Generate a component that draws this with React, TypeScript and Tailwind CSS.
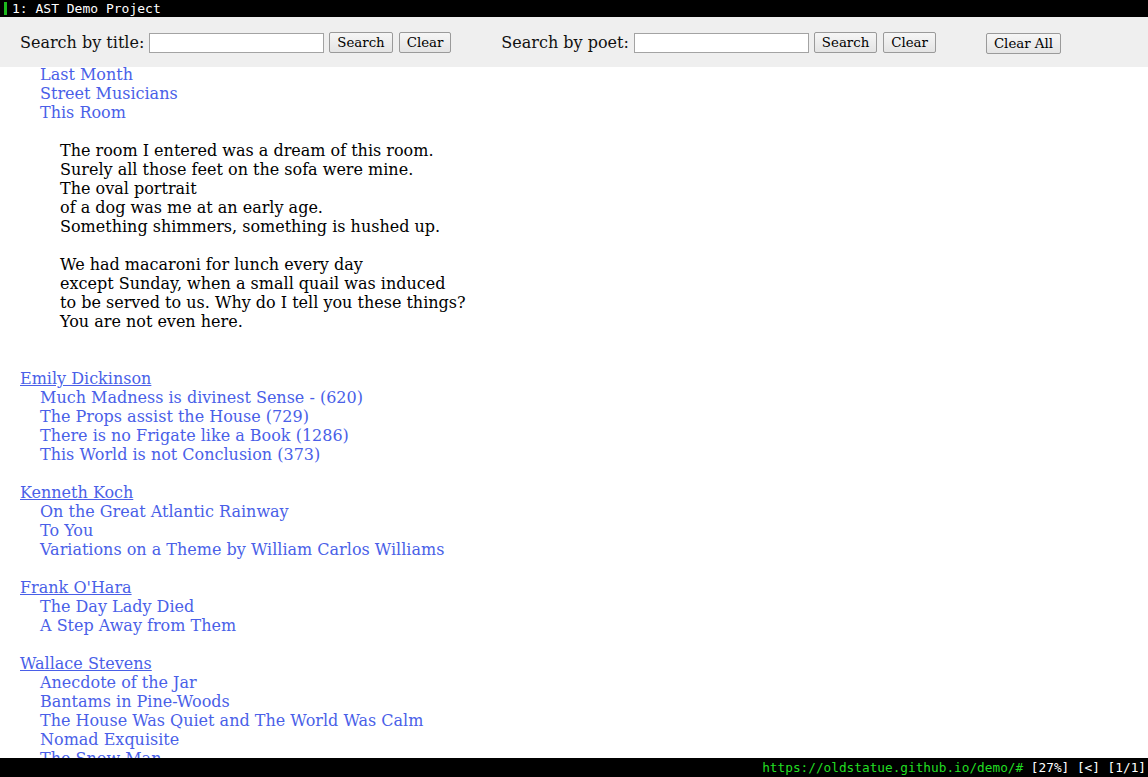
import React from 'react';

const serif = "font-['DejaVu_Serif','Liberation_Serif',serif]";
const mono = "font-['DejaVu_Sans_Mono','Liberation_Mono',monospace]";

const poets = [
  {
    name: 'Emily Dickinson',
    poems: [
      'Much Madness is divinest Sense - (620)',
      'The Props assist the House (729)',
      'There is no Frigate like a Book (1286)',
      'This World is not Conclusion (373)',
    ],
  },
  {
    name: 'Kenneth Koch',
    poems: ['On the Great Atlantic Rainway', 'To You', 'Variations on a Theme by William Carlos Williams'],
  },
  { name: "Frank O'Hara", poems: ['The Day Lady Died', 'A Step Away from Them'] },
  {
    name: 'Wallace Stevens',
    poems: [
      'Anecdote of the Jar',
      'Bantams in Pine-Woods',
      'The House Was Quiet and The World Was Calm',
      'Nomad Exquisite',
      'The Snow Man',
      'The Emperor of Ice-Cream',
    ],
  },
];

const stanzas = [
  [
    'The room I entered was a dream of this room.',
    'Surely all those feet on the sofa were mine.',
    'The oval portrait',
    'of a dog was me at an early age.',
    'Something shimmers, something is hushed up.',
  ],
  [
    'We had macaroni for lunch every day',
    'except Sunday, when a small quail was induced',
    'to be served to us. Why do I tell you these things?',
    'You are not even here.',
  ],
];

function Btn({ children }: { children: React.ReactNode }) {
  return (
    <button
      className={`${serif} h-[21px] px-[7px] text-[13.33px] leading-none text-black border border-[#9a9a9a] rounded-[2px] bg-gradient-to-b from-[#f6f6f6] to-[#e4e4e4]`}
    >
      {children}
    </button>
  );
}

function SearchGroup({ label }: { label: string }) {
  return (
    <div className="flex items-center">
      <span className="text-[16px] text-[#111]">{label}</span>
      <input className="ml-[5px] w-[175px] h-[20px] border border-[#a3a3a3] bg-white" />
      <div className="ml-[5px] flex gap-[6px]">
        <Btn>Search</Btn>
        <Btn>Clear</Btn>
      </div>
    </div>
  );
}

export default function App() {
  return (
    <div className={`${serif} h-[777px] w-[1148px] flex flex-col overflow-hidden bg-white`}>
      <div className={`${mono} h-[17px] bg-black text-white text-[13px] leading-[17px] flex items-center`}>
        <div className="ml-[4px] w-[3px] h-[13px] bg-[#1db91d]" />
        <span className="ml-[5px]">1: AST Demo Project</span>
      </div>

      <div className="h-[50px] bg-[#efefef] flex items-center pl-[20px] pt-[1px]">
        <SearchGroup label="Search by title:" />
        <div className="ml-[50px]">
          <SearchGroup label="Search by poet:" />
        </div>
        <div className="ml-[50px]">
          <Btn>Clear All</Btn>
        </div>
      </div>

      <div className="flex-1 overflow-hidden text-[16px] leading-[19px]">
        <div className="-mt-[2px] pl-[20px]">
          <div className="pl-[20px] text-[#4a5fe8]">
            <div>Last Month</div>
            <div>Street Musicians</div>
            <div>This Room</div>
          </div>
          <div className="pl-[40px] pt-[19px] text-black">
            {stanzas.map((s, i) => (
              <div key={i} className="pb-[19px]">
                {s.map((l) => (
                  <div key={l}>{l}</div>
                ))}
              </div>
            ))}
          </div>
          <div className="pt-[19px]">
            {poets.map((p) => (
              <div key={p.name} className="pb-[19px]">
                <a href="#" className="text-[#4a5fe8] underline">
                  {p.name}
                </a>
                <div className="pl-[20px] text-[#4a5fe8]">
                  {p.poems.map((t) => (
                    <div key={t}>{t}</div>
                  ))}
                </div>
              </div>
            ))}
          </div>
        </div>
      </div>

      <div className={`${mono} h-[19px] bg-black text-[12.75px] leading-[19px] flex justify-end pr-[2px]`}>
        <span className="text-[#22dd22]">https://oldstatue.github.io/demo/#</span>
        <span className="text-white whitespace-pre"> [27%] [&lt;] [1/1]</span>
      </div>
    </div>
  );
}
